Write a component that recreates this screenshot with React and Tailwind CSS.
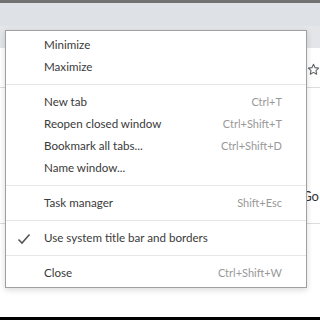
import React from "react";

const items = [
  { type: "item", label: "Minimize" },
  { type: "item", label: "Maximize" },
  { type: "sep" },
  { type: "item", label: "New tab", sc: "Ctrl+T" },
  { type: "item", label: "Reopen closed window", sc: "Ctrl+Shift+T" },
  { type: "item", label: "Bookmark all tabs...", sc: "Ctrl+Shift+D" },
  { type: "item", label: "Name window..." },
  { type: "sep" },
  { type: "item", label: "Task manager", sc: "Shift+Esc" },
  { type: "sep" },
  { type: "item", label: "Use system title bar and borders", check: true },
  { type: "sep" },
  { type: "item", label: "Close", sc: "Ctrl+Shift+W" },
];

export default function App() {
  return (
    <div className="relative w-[320px] h-[320px] overflow-hidden bg-white" style={{ fontFamily: "Lato, 'Liberation Sans', sans-serif" }}>
      <div className="flex flex-col h-full">
        <div className="h-[3px] bg-[#727272]" />
        <div className="h-[23px] bg-[#dee1e6]" />
        <div className="h-[22px] bg-[#e3e5e9]" />
        <div className="h-[39px] bg-white flex items-center justify-end">
          <svg width="13" height="13" viewBox="0 0 24 24" className="mr-[0px] mt-[4px]" fill="none" stroke="#5f6368" strokeWidth="2" strokeLinejoin="round">
            <path d="M12 2.5l2.9 6.1 6.6.8-4.9 4.6 1.3 6.6L12 17.3l-5.9 3.3 1.3-6.6-4.9-4.6 6.6-.8z" />
          </svg>
        </div>
        <div className="h-px bg-[#dadce0]" />
        <div className="h-[135px] bg-white flex flex-col justify-end items-end pb-[19px]">
          <span className="text-[13px] leading-[16px] text-[#333] mr-[1px]">Go</span>
        </div>
        <div className="h-px bg-[#dadce0]" />
        <div className="flex-1 bg-white" />
        <div className="h-[3px] bg-black" />
      </div>

      <div className="absolute left-[5px] top-[30px] w-[302px] h-[258px] bg-white border border-[#a0a0a0] shadow-[0_2px_6px_rgba(0,0,0,0.15)] pt-[3px] pb-[3px] flex flex-col">
        {items.map((it, i) =>
          it.type === "sep" ? (
            <div key={i} className="h-[13px] flex items-center">
              <div className="h-px w-full bg-[#e6e6e6]" />
            </div>
          ) : (
            <div key={i} className="h-[22px] flex items-center pl-[38px] pr-[24px] text-[11.6px] text-[#3a3a3a]">
              <div className="w-0 relative">
                {it.check && (
                  <svg width="14" height="12" viewBox="0 0 14 12" className="absolute left-[-27px] top-[-5px]" fill="none" stroke="#555" strokeWidth="1.6">
                    <path d="M1.5 6.5l3.5 3.5L12.5 1.5" />
                  </svg>
                )}
              </div>
              <span className="flex-1">{it.label}</span>
              {it.sc && <span className="text-[11px] text-[#999]">{it.sc}</span>}
            </div>
          )
        )}
      </div>
    </div>
  );
}
